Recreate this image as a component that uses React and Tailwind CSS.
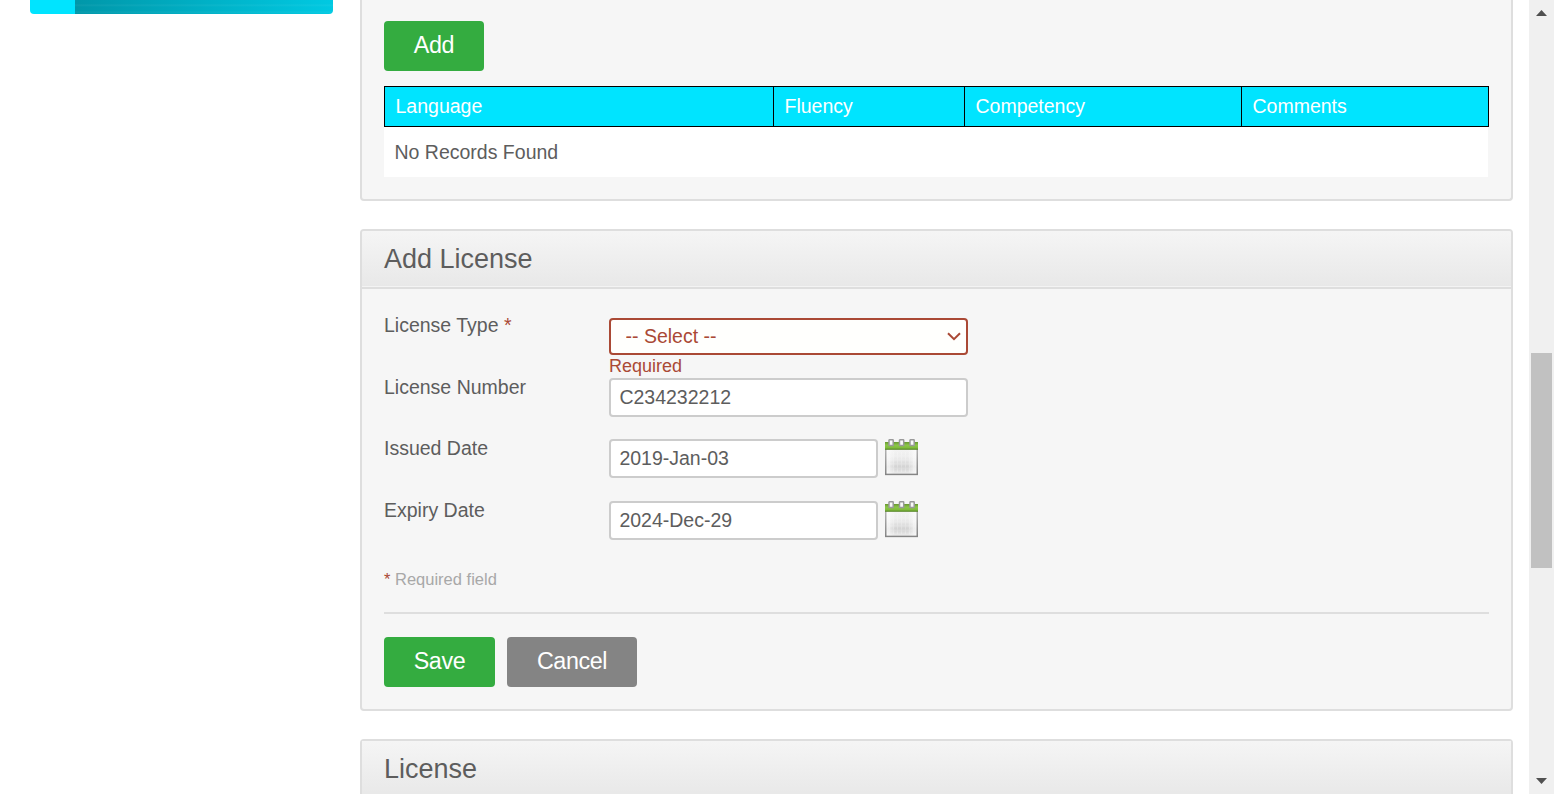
import React from "react";

function Button({ children, className }) {
  return (
    <button
      type="button"
      className={`h-[50px] shrink-0 rounded-[4px] pb-[2px] text-center text-[23.3px] leading-[48px] tracking-[-0.4px] text-white ${className}`}
    >
      {children}
    </button>
  );
}

function CalendarIcon() {
  return (
    <svg width="33" height="37" viewBox="0 0 33 37" className="ml-[7px] shrink-0">
      <defs>
        <linearGradient id="page" x1="0" y1="0" x2="0" y2="1">
          <stop offset="0" stopColor="#f6f6f6" />
          <stop offset="0.4" stopColor="#ebebeb" />
          <stop offset="0.75" stopColor="#d2d2d2" />
          <stop offset="1" stopColor="#f0f0f0" />
        </linearGradient>
        <linearGradient id="sheen" x1="0" y1="0" x2="1" y2="0">
          <stop offset="0" stopColor="#ffffff" stopOpacity="0.8" />
          <stop offset="0.3" stopColor="#ffffff" stopOpacity="0" />
          <stop offset="0.7" stopColor="#ffffff" stopOpacity="0" />
          <stop offset="1" stopColor="#ffffff" stopOpacity="0.8" />
        </linearGradient>
        <linearGradient id="edge" x1="0" y1="0" x2="0" y2="1">
          <stop offset="0" stopColor="#b5b5b5" />
          <stop offset="1" stopColor="#858585" />
        </linearGradient>
        <linearGradient id="band" x1="0" y1="0" x2="0" y2="1">
          <stop offset="0" stopColor="#67972f" />
          <stop offset="0.4" stopColor="#8cc54a" />
          <stop offset="0.75" stopColor="#80bc3c" />
          <stop offset="1" stopColor="#4f7d22" />
        </linearGradient>
      </defs>
      <rect x="0.75" y="8" width="31.5" height="27.4" fill="url(#page)" />
      <rect x="0.75" y="8" width="31.5" height="27.4" fill="url(#sheen)" stroke="url(#edge)" strokeWidth="1.5" />
      <path
        d="M4.5 15v17M8.5 13v20M12.5 13v20M16.5 13v20M20.5 13v20M24.5 13v20M28.5 15v17M3 17h27M3 21h27M3 25h27M3 29h27"
        stroke="#ffffff"
        strokeWidth="1"
        opacity="0.25"
      />
      <rect x="0" y="3" width="33" height="7.8" fill="url(#band)" />
      {[4, 14.5, 25].map((x) => (
        <rect key={x} x={x} y="0.8" width="4.2" height="5.8" rx="0.4" fill="#fafafa" stroke="#9a9a9a" strokeWidth="1.5" />
      ))}
    </svg>
  );
}

function Heading({ children }) {
  return (
    <h1 className="h-[58px] border-b-2 border-[#dedede] bg-linear-to-b from-[#f5f5f5] to-[#e8e8e8] pl-[22px] text-[27px] leading-[56px] font-normal shadow-[inset_0_-1px_0_#f3f3f3]">
      {children}
    </h1>
  );
}

function Label({ children }) {
  return <label className="block w-[225px] shrink-0 leading-[24px]">{children}</label>;
}

const fieldClass =
  "rounded-[4px] border-2 border-[#cccccc] bg-white pl-[8.4px] text-[19.5px] text-[#5d5d5d] outline-none";

function DateRow({ label, value }) {
  return (
    <div className="flex h-[39px] items-start">
      <div className="-mt-[3px]">
        <Label>{label}</Label>
      </div>
      <input defaultValue={value} className={`h-[39px] w-[269px] ${fieldClass}`} />
      <CalendarIcon />
    </div>
  );
}

const headCell = "h-[39px] border-r border-black pl-[10.5px] leading-[38px]";

export default function App() {
  return (
    <div className="flex h-[794px] w-[1554px] overflow-hidden bg-white font-['Liberation_Sans',Arial,sans-serif] text-[19.5px] text-[#5d5d5d]">
      <aside className="w-[360px] shrink-0 pl-[30px]">
        <div className="flex h-[14px] w-[303px] overflow-hidden rounded-b-[4px]">
          <div className="w-[45px] bg-[#00e4ff]" />
          <div className="grow bg-[repeating-linear-gradient(180deg,transparent_0px,transparent_4px,rgba(255,255,255,0.05)_5px,transparent_7px),linear-gradient(90deg,#0097a9,#00c9e2)]" />
        </div>
      </aside>

      <main className="flex w-[1153px] shrink-0 flex-col">
        <section className="h-[201px] shrink-0 rounded-b-[4px] border-2 border-t-0 border-[#dedede] bg-[#f6f6f6] pt-[21px] pl-[22px]">
          <Button className="w-[100px] bg-[#34ac40]">Add</Button>
          <div className="mt-[15px] w-[1105px]">
            <div className="grid h-[41px] grid-cols-[389px_191px_277px_246px] border border-black bg-[#00e4ff] text-white">
              <div className={headCell}>Language</div>
              <div className={headCell}>Fluency</div>
              <div className={headCell}>Competency</div>
              <div className="pl-[10.5px] leading-[38px]">Comments</div>
            </div>
            <div className="h-[50px] w-[1104px] bg-white pl-[10.5px] leading-[50px]">No Records Found</div>
          </div>
        </section>

        <section className="mt-[28px] h-[482px] shrink-0 overflow-hidden rounded-[4px] border-2 border-[#dedede] bg-[#f6f6f6]">
          <Heading>Add License</Heading>
          <form className="flex flex-col pl-[22px]">
            <div className="flex h-[89px] items-start">
              <div className="pt-[24px]">
                <Label>
                  License Type <span className="text-[#aa4935]">*</span>
                </Label>
              </div>
              <div className="pt-[29px]">
                <div className="grid h-[37px] w-[359px] items-center">
                  <select className="col-start-1 row-start-1 h-[37px] w-[359px] appearance-none rounded-[4px] border-2 border-[#aa4935] bg-[#fffffd] pl-[14.5px] text-[19.5px] text-[#aa4935]">
                    <option>-- Select --</option>
                  </select>
                  <svg
                    width="14"
                    height="9"
                    viewBox="0 0 14 9"
                    className="pointer-events-none col-start-1 row-start-1 mr-[7px] justify-self-end"
                  >
                    <path d="M1 1.2 7 7.2 13 1.2" fill="none" stroke="#aa4935" strokeWidth="2" />
                  </svg>
                </div>
                <span className="block h-[23px] text-[18px] leading-[22px] text-[#aa4935]">Required</span>
              </div>
            </div>
            <div className="flex h-[39px] items-start">
              <div className="-mt-[3px]">
                <Label>License Number</Label>
              </div>
              <input defaultValue="C234232212" className={`h-[39px] w-[359px] ${fieldClass}`} />
            </div>
            <div className="mt-[22px] flex flex-col gap-[23px]">
              <DateRow label="Issued Date" value="2019-Jan-03" />
              <DateRow label="Expiry Date" value="2024-Dec-29" />
            </div>
            <p className="mt-[29px] h-[45px] w-[1105px] border-b-2 border-[#dedede] text-[16.5px] leading-[20px] text-[#a8a8a8]">
              <span className="text-[#aa4935]">*</span> Required field
            </p>
            <div className="mt-[23px] flex gap-[12px]">
              <Button className="w-[111px] bg-[#34ac40]">Save</Button>
              <Button className="w-[130px] bg-[#848484]">Cancel</Button>
            </div>
          </form>
        </section>

        <section className="mt-[28px] h-[100px] shrink-0 rounded-[4px] border-2 border-[#dedede] bg-[#f6f6f6]">
          <Heading>License</Heading>
        </section>
      </main>

      <div className="ml-[16px] flex h-[794px] w-[25px] shrink-0 flex-col items-center bg-[#f0f0f0]">
        <svg width="11" height="6" viewBox="0 0 11 6" className="mt-[10px]">
          <path d="M0 6 5.5 0 11 6z" fill="#505050" />
        </svg>
        <div className="mt-[337px] h-[215px] w-[21px] bg-[#c1c1c1]" />
        <svg width="11" height="6" viewBox="0 0 11 6" className="mt-[210px]">
          <path d="M0 0 5.5 6 11 0z" fill="#505050" />
        </svg>
      </div>
    </div>
  );
}
